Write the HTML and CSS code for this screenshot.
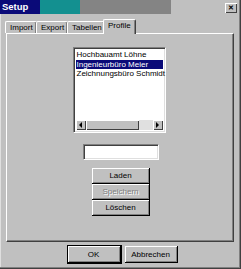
FILE: index.html
```html
<!DOCTYPE html>
<html lang="de">
<head>
  <meta charset="UTF-8" />
  <title>Setup</title>
  <link rel="stylesheet" href="styles.css">
</head>
<body>
  <div class="janela">
    <div class="titulo">
      <div class="tb-azul">Setup</div>
      <div class="tb-teal"></div>
      <div class="tb-cinza"></div>
      <div class="tb-resto">
        <div class="fechar">&#x2715;</div>
      </div>
    </div>

    <div class="abas">
      <div class="aba">Import</div>
      <div class="aba">Export</div>
      <div class="aba">Tabellen</div>
      <div class="aba ativa">Profile</div>
    </div>

    <div class="painel">
      <div class="lista">
        <div class="itens">
          <div class="item">Hochbauamt Löhne</div>
          <div class="item sel">Ingenieurbüro Meier</div>
          <div class="item">Zeichnungsbüro Schmidt</div>
        </div>
        <div class="rolagem">
          <div class="seta"><span class="tri esq"></span></div>
          <div class="polegar"></div>
          <div class="trilho"></div>
          <div class="seta"><span class="tri dir"></span></div>
        </div>
      </div>

      <input class="campo" type="text">

      <div class="botoes">
        <button class="btn">Laden</button>
        <button class="btn" disabled>Speichern</button>
        <button class="btn">Löschen</button>
      </div>
    </div>

    <div class="rodape">
      <button class="btn ok">OK</button>
      <button class="btn cancelar">Abbrechen</button>
    </div>
  </div>
</body>
</html>
```

FILE: styles.css
```css
body {
  margin: 0;
  background: #c0c0c0;
  font-family: 'Liberation Sans', Arial, sans-serif;
  font-size: 8px;
  color: #000;
}
.janela {
  width: 241px;
  height: 269px;
  box-sizing: border-box;
  border-right: 1px solid #404040;
  border-bottom: 1px solid #404040;
  box-shadow: inset -1px -1px 0 #808080, inset 1px 0 0 #dfdfdf;
  overflow: hidden;
}
.titulo {
  display: flex;
  height: 14px;
}
.tb-azul {
  width: 40px;
  background: #0a0a78;
  color: white;
  font-weight: bold;
  font-size: 9.5px;
  line-height: 14px;
  padding-left: 2px;
  box-sizing: border-box;
}
.tb-teal {
  width: 40px;
  background: #139090;
}
.tb-cinza {
  width: 91px;
  background: #848484;
}
.tb-resto {
  flex: 1;
  display: flex;
  justify-content: flex-end;
  padding: 3px 3px 0 0;
}
.fechar {
  width: 12px;
  height: 10px;
  box-sizing: border-box;
  background: #c0c0c0;
  box-shadow: inset 1px 1px 0 #fff, inset -1px -1px 0 #404040;
  font-size: 7px;
  font-weight: bold;
  line-height: 10px;
  text-align: center;
}
.abas {
  display: flex;
  align-items: flex-end;
  height: 19px;
  padding-left: 6px;
  position: relative;
  z-index: 1;
}
.aba {
  height: 11px;
  line-height: 11px;
  padding: 0 4px;
  border-top: 1px solid #fff;
  border-left: 1px solid #fff;
  border-right: 1px solid #404040;
  border-radius: 2px 2px 0 0;
  box-shadow: inset -1px 0 0 #808080;
  background: #c0c0c0;
  margin-left: -1px;
}
.aba:nth-child(1) { width: 22px; }
.aba:nth-child(2) { width: 22px; }
.aba:nth-child(3) { width: 28px; }
.aba.ativa {
  width: 23px;
  height: 14px;
  line-height: 12px;
  margin-bottom: -1px;
  margin-left: -2px;
}
.painel {
  margin: 0 6px;
  height: 209px;
  box-sizing: border-box;
  border-top: 1px solid #fff;
  border-left: 1px solid #fff;
  border-right: 1px solid #404040;
  border-bottom: 1px solid #404040;
  box-shadow: inset -1px -1px 0 #808080;
  display: flex;
  flex-direction: column;
  align-items: center;
  padding-top: 13px;
}
.lista {
  width: 93px;
  height: 86px;
  box-sizing: border-box;
  border-top: 1px solid #808080;
  border-left: 1px solid #808080;
  border-right: 1px solid #fff;
  border-bottom: 1px solid #fff;
  box-shadow: inset 1px 1px 0 #404040, inset -1px -1px 0 #dfdfdf;
  background: white;
  padding: 2px;
  display: flex;
  flex-direction: column;
  margin-right: 2px;
}
.itens {
  flex: 1;
}
.item {
  height: 9.5px;
  line-height: 9.5px;
  padding-left: 1px;
  white-space: nowrap;
}
.item.sel {
  background: #0a0a78;
  color: white;
}
.rolagem {
  display: flex;
  height: 10px;
  background: #e0e0e0;
}
.seta, .polegar {
  background: #c0c0c0;
  box-shadow: inset 1px 1px 0 #fff, inset -1px -1px 0 #404040;
  display: flex;
  align-items: center;
  justify-content: center;
}
.seta {
  width: 10px;
}
.polegar {
  width: 53px;
}
.trilho {
  flex: 1;
}
.tri {
  width: 0;
  height: 0;
  border-top: 3px solid transparent;
  border-bottom: 3px solid transparent;
}
.tri.esq { border-right: 3px solid #000; }
.tri.dir { border-left: 3px solid #000; }
.campo {
  width: 76px;
  height: 16px;
  box-sizing: border-box;
  margin: 11px 0 0 2px;
  border-top: 1px solid #808080;
  border-left: 1px solid #808080;
  border-right: 1px solid #fff;
  border-bottom: 1px solid #fff;
  box-shadow: inset 1px 1px 0 #404040, inset -1px -1px 0 #dfdfdf;
  background: white;
  padding: 0;
}
.botoes {
  display: flex;
  flex-direction: column;
  margin: 8px 0 0 2px;
}
.btn {
  width: 58px;
  height: 16px;
  font-family: 'Liberation Sans', Arial, sans-serif;
  font-size: 8px;
  background: #c0c0c0;
  border: none;
  border-right: 1px solid #000;
  border-bottom: 1px solid #000;
  box-shadow: inset 1px 1px 0 #fff, inset -1px -1px 0 #808080;
  padding: 0;
  color: #000;
}
.btn:disabled {
  color: #808080;
  text-shadow: 1px 1px 0 #fff;
}
.rodape {
  display: flex;
  justify-content: center;
  gap: 4px;
  margin-top: 4px;
  padding-left: 5px;
}
.rodape .btn {
  width: 53px;
  height: 17px;
}
.btn.ok {
  outline: 1px solid #000;
}
```
